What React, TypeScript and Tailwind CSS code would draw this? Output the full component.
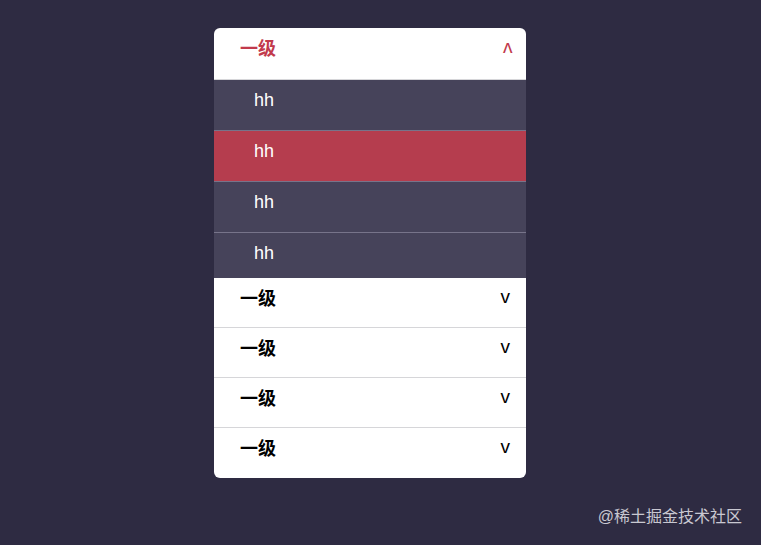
import React, { FC, useState } from "react";

const SUB_ITEMS = ["hh", "hh", "hh", "hh"];
const GROUPS = [0, 1, 2, 3, 4];

const font = { fontFamily: '"Liberation Sans", "Noto Sans CJK SC", sans-serif' };

const App: FC = () => {
  const [open] = useState(0);
  const [active] = useState(1);
  return (
    <div className="w-[761px] h-[545px] bg-[#2e2b42] relative flex" style={font}>
      <div className="w-[312px] mt-[28px] ml-[214px] h-[450px] bg-white rounded-[6px] overflow-hidden flex flex-col">
        {GROUPS.map((g, i) => {
          const isOpen = g === open;
          const last = i === GROUPS.length - 1;
          return (
            <div key={g}>
              <div
                className={
                  "box-border flex items-start justify-between pl-[26px] pt-[10px] " +
                  (isOpen ? "h-[52px] pr-[14px] " : "h-[50px] pr-[16px] ") +
                  (last ? "" : "border-b border-[#d6d6d9]")
                }
              >
                <span
                  className={
                    "text-[18px] leading-[22px] font-bold " +
                    (isOpen ? "text-[#c23a4c]" : "text-black")
                  }
                >
                  一级
                </span>
                <span
                  className={
                    "inline-block text-[19px] leading-[20px] font-normal " +
                    (isOpen ? "text-[#c23a4c] rotate-180 mt-[1px]" : "text-black mt-[-1px]")
                  }
                >
                  v
                </span>
              </div>
              {isOpen && (
                <div className="h-[198px] overflow-hidden bg-[#46435a]">
                  {SUB_ITEMS.map((s, j) => (
                    <div
                      key={j}
                      className={
                        "h-[51px] box-border pl-[40px] pt-[9px] text-[18px] leading-[22px] text-white border-b border-[#77748a] " +
                        (j === active ? "bg-[#b53d4e]" : "bg-[#46435a]")
                      }
                    >
                      {s}
                    </div>
                  ))}
                </div>
              )}
            </div>
          );
        })}
      </div>
      <div className="absolute right-[19px] bottom-[18px] text-[16px] leading-[20px] text-[#c9c8d1]">
        @稀土掘金技术社区
      </div>
    </div>
  );
};

export default App;
